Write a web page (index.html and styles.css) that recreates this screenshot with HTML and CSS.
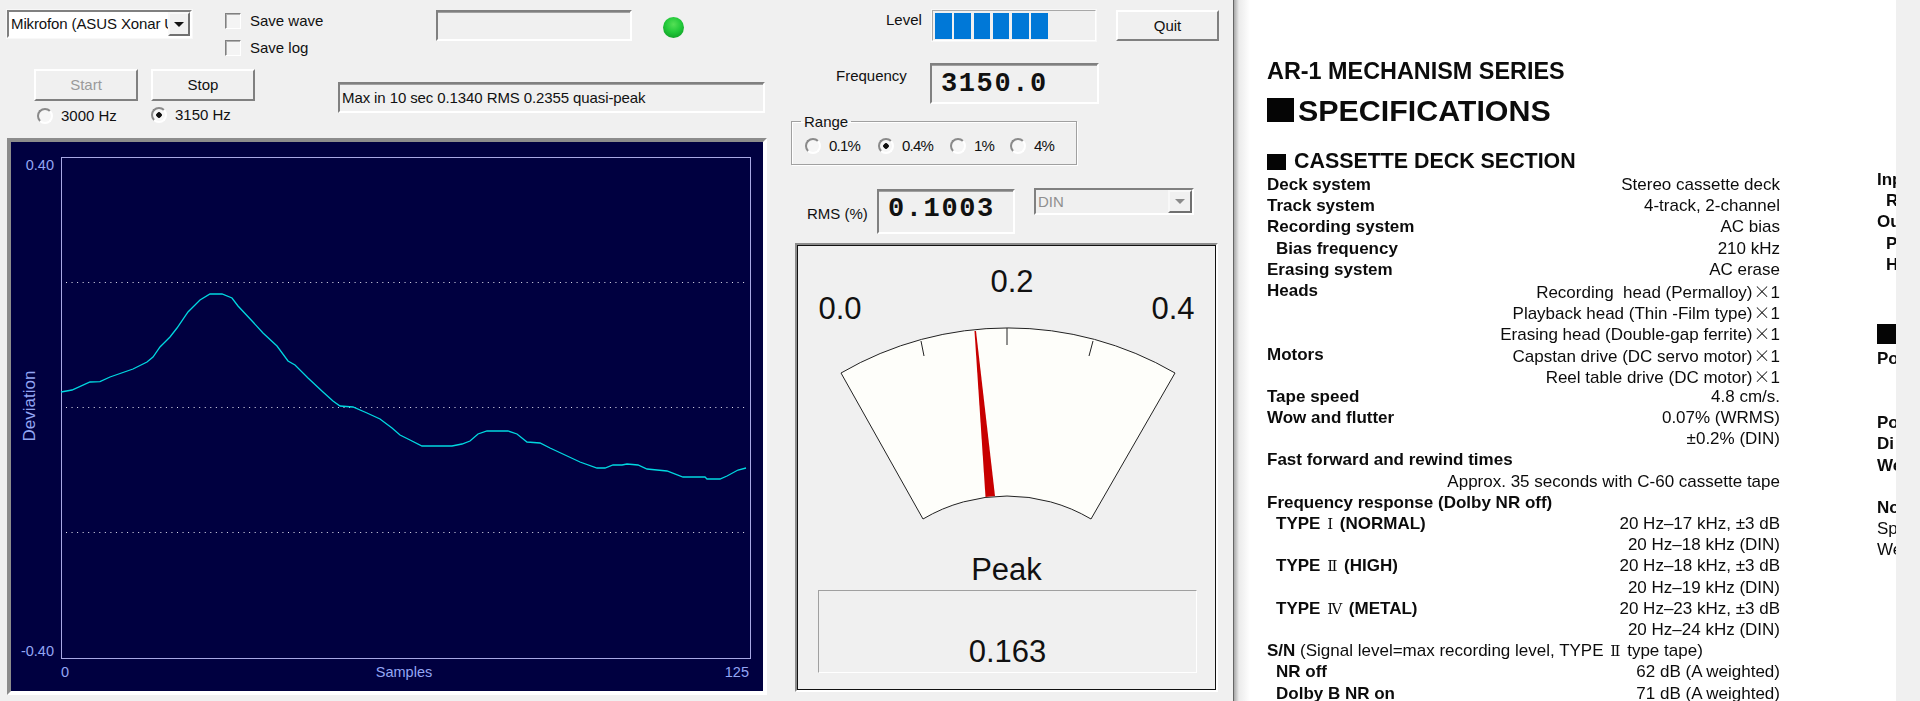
FILE: index.html
```html
<!DOCTYPE html>
<html lang="en">
<head>
<meta charset="utf-8">
<title>Wow and flutter meter</title>
<link rel="stylesheet" href="styles.css">
</head>
<body>
<main class="app">
  <section class="left">
    <div class="row-top">
      <div class="combo combo-device"><span class="combo-text">Mikrofon (ASUS Xonar U</span><span class="combo-btn"><i class="arrow"></i></span></div>
      <div class="checks">
        <label class="check"><i class="box"></i>Save wave</label>
        <label class="check"><i class="box"></i>Save log</label>
      </div>
      <div class="sunken file-box"></div>
      <div class="led"></div>
    </div>
    <div class="row-run">
      <div class="run-grid">
        <div class="btn disabled">Start</div>
        <div class="btn">Stop</div>
        <label class="radio-item r-3000"><i class="radio"></i>3000 Hz</label>
        <label class="radio-item r-3150"><i class="radio on"></i>3150 Hz</label>
      </div>
      <div class="sunken status">Max in 10 sec 0.1340 RMS 0.2355 quasi-peak</div>
    </div>
    <div class="chart">
      <svg class="chart-svg" viewBox="11 142 752 549" role="img" aria-label="Deviation chart">
        <line class="grid" x1="66" x2="746" y1="282.5" y2="282.5"/>
        <line class="grid" x1="66" x2="746" y1="407.5" y2="407.5"/>
        <line class="grid" x1="66" x2="746" y1="532.5" y2="532.5"/>
        <rect class="plot" x="61.5" y="157.5" width="689" height="501"/>
        <polyline class="trace" points="61,392 72,390 90,382 100,381.7 110,377 133,369 147,362 153,357 160,347 170,337 177,328 188,312 200,300 210,294 222,294 232,298 238,306 253,322 263,333 277,346 288,361 295,365 308,378 323,392 333,401 340,406 353,407 367,413 380,419 392,428 400,435 410,440 422,446 452,446 462,444 470,441 478,434 487,431 508,431 517,434 527,442 540,443 550,448 580,462 597,468 605,468 613,465 622,465 627,464 638,465 647,469 667,471 683,477 705,477 707,479 720,479 727,476 738,470 746,468"/>
        <text class="axis" x="54" y="170" text-anchor="end">0.40</text>
        <text class="axis" x="54" y="656" text-anchor="end">-0.40</text>
        <text class="axis" x="61" y="677">0</text>
        <text class="axis" x="404" y="677" text-anchor="middle">Samples</text>
        <text class="axis" x="749" y="677" text-anchor="end">125</text>
        <text class="axis axis-y" transform="translate(35 406) rotate(-90)" text-anchor="middle">Deviation</text>
      </svg>
    </div>
  </section>
  <section class="right">
    <div class="row-level">
      <span class="lbl-level">Level</span>
      <div class="sunken-soft level-bar">
        <i class="seg"></i><i class="seg"></i><i class="seg"></i><i class="seg"></i><i class="seg"></i><i class="seg"></i>
      </div>
      <div class="btn quit">Quit</div>
    </div>
    <div class="row-freq">
      <span class="lbl-freq">Frequency</span>
      <div class="sunken readout freq">3150.0</div>
    </div>
    <fieldset class="range">
      <legend>Range</legend>
      <label class="radio-item r-a"><i class="radio"></i>0.1%</label>
      <label class="radio-item r-b"><i class="radio on"></i>0.4%</label>
      <label class="radio-item r-c"><i class="radio"></i>1%</label>
      <label class="radio-item r-d"><i class="radio"></i>4%</label>
    </fieldset>
    <div class="row-rms">
      <span class="lbl-rms">RMS (%)</span>
      <div class="sunken readout rms">0.1003</div>
      <div class="combo combo-din"><span class="combo-text">DIN</span><span class="combo-btn"><i class="arrow"></i></span></div>
    </div>
    <div class="meter-frame">
      <div class="meter">
        <svg class="dial" viewBox="798 247 418 309" role="img" aria-label="Peak meter">
          <path class="face" d="M841 374 A332 332 0 0 1 1175 374 L1091 520 A165 165 0 0 0 923 520 Z"/>
          <line class="tick" x1="921" y1="342" x2="924" y2="357"/>
          <line class="tick" x1="1007" y1="329" x2="1007" y2="346"/>
          <line class="tick" x1="1093" y1="342" x2="1089" y2="357"/>
          <polygon class="needle" points="974.5,332 976,332 995,497 985.5,498"/>
          <text class="dial-num" x="840" y="320" text-anchor="middle">0.0</text>
          <text class="dial-num" x="1012" y="293" text-anchor="middle">0.2</text>
          <text class="dial-num" x="1173" y="320" text-anchor="middle">0.4</text>
        </svg>
        <div class="peak-label">Peak</div>
        <div class="peak-box">0.163</div>
      </div>
    </div>
  </section>
</main>
<article class="doc">
  <div class="doc-main">
    <h1 class="series">AR-1 MECHANISM SERIES</h1>
    <h2 class="spec"><i class="sq sq-big"></i>SPECIFICATIONS</h2>
    <h3 class="section"><i class="sq sq-mid"></i>CASSETTE DECK SECTION</h3>
    <div class="row"><b>Deck system</b><span>Stereo cassette deck</span></div>
    <div class="row"><b>Track system</b><span>4-track, 2-channel</span></div>
    <div class="row"><b>Recording system</b><span>AC bias</span></div>
    <div class="row"><b class="ind">Bias frequency</b><span>210 kHz</span></div>
    <div class="row"><b>Erasing system</b><span>AC erase</span></div>
    <div class="row"><b>Heads</b><span>Recording&nbsp; head (Permalloy)<em>×</em>1</span></div>
    <div class="row"><b></b><span>Playback head (Thin -Film type)<em>×</em>1</span></div>
    <div class="row"><b></b><span>Erasing head (Double-gap ferrite)<em>×</em>1</span></div>
    <div class="row"><b>Motors</b><span>Capstan drive (DC servo motor)<em>×</em>1</span></div>
    <div class="row"><b></b><span>Reel table drive (DC motor)<em>×</em>1</span></div>
    <div class="row"><b>Tape speed</b><span>4.8 cm/s.</span></div>
    <div class="row"><b>Wow and flutter</b><span>0.07% (WRMS)</span></div>
    <div class="row"><b></b><span>±0.2% (DIN)</span></div>
    <div class="row"><b>Fast forward and rewind times</b></div>
    <div class="row"><b></b><span>Approx. 35 seconds with C-60 cassette tape</span></div>
    <div class="row"><b>Frequency response (Dolby NR off)</b></div>
    <div class="row"><b class="ind">TYPE <u>Ⅰ</u> (NORMAL)</b><span>20 Hz–17 kHz, ±3 dB</span></div>
    <div class="row"><b></b><span>20 Hz–18 kHz (DIN)</span></div>
    <div class="row"><b class="ind">TYPE <u>Ⅱ</u> (HIGH)</b><span>20 Hz–18 kHz, ±3 dB</span></div>
    <div class="row"><b></b><span>20 Hz–19 kHz (DIN)</span></div>
    <div class="row"><b class="ind">TYPE <u>Ⅳ</u> (METAL)</b><span>20 Hz–23 kHz, ±3 dB</span></div>
    <div class="row"><b></b><span>20 Hz–24 kHz (DIN)</span></div>
    <div class="row row-left"><b>S/N</b><span>&nbsp;(Signal level=max recording level, TYPE <u>Ⅱ</u> type tape)</span></div>
    <div class="row"><b class="ind">NR off</b><span>62 dB (A weighted)</span></div>
    <div class="row"><b class="ind">Dolby B NR on</b><span>71 dB (A weighted)</span></div>
  </div>
  <div class="doc-side">
    <div class="side"><b>Inp</b></div>
    <div class="side"><b class="ind">R</b></div>
    <div class="side"><b>Ou</b></div>
    <div class="side"><b class="ind">P</b></div>
    <div class="side"><b class="ind">H</b></div>
    <i class="sq sq-side"></i>
    <div class="side"><b>Po</b></div>
    <div class="side gap-a"><b>Po</b></div>
    <div class="side"><b>Di</b></div>
    <div class="side"><b>We</b></div>
    <div class="side gap-b"><b>No</b></div>
    <div class="side"><span>Sp</span></div>
    <div class="side"><span>We</span></div>
  </div>
</article>
<div class="edge"></div>
</body>
</html>
```
FILE: styles.css
```css
* { box-sizing: border-box; }
html, body { margin: 0; height: 701px; overflow: hidden; }
body {
  display: flex;
  background: #f0f0f0;
  font: 15px/18px "Liberation Sans", Arial, sans-serif;
  color: #111;
}
i, u, em { font-style: normal; text-decoration: none; }

/* application window */
.app {
  display: flex;
  flex: 0 0 1234px;
  height: 701px;
  padding-left: 7px;
  background: #f0f0f0;
  border-right: 1px solid #666;
}
.left { width: 760px; }
.right { width: 430px; margin-left: 23px; }

.sunken {
  background: #f0f0f0;
  border: 2px solid;
  border-color: #808080 #fff #fff #808080;
  box-shadow: inset 0 1px 0 #a0a0a0;
}
.sunken-soft {
  background: #f0f0f0;
  border: 1px solid;
  border-color: #a8a8a8 #fff #fff #a8a8a8;
  outline: 1px solid #f8f8f8;
}

.row-top { display: flex; align-items: flex-start; height: 59px; padding-top: 10px; }
.combo { display: flex; background: #fff; border: 2px solid; border-color: #808080 #fff #fff #808080; }
.combo-device { width: 185px; height: 28px; border-width: 2px; outline: 1px solid #f8f8f8; }
.combo-text { flex: 1; overflow: hidden; white-space: nowrap; padding: 2px 0 0 2px; line-height: 20px; }
.combo-device .combo-text { letter-spacing: -0.12px; }
.combo-btn {
  display: flex;
  flex: 0 0 22px;
  align-items: center;
  justify-content: center;
  background: #f0f0f0;
  border: 2px solid;
  border-color: #f8f8f8 #707070 #707070 #f8f8f8;
}
.arrow { width: 0; height: 0; border: 5px solid transparent; border-top: 5px solid #111; border-bottom: 0; }

.checks { display: flex; flex-direction: column; width: 211px; margin-left: 33px; gap: 10px; padding-top: 2px; }
.check { display: flex; align-items: center; height: 17px; gap: 9px; }
.box {
  width: 16px; height: 16px;
  background: #f4f4f4;
  border: 1px solid;
  border-color: #808080 #fff #fff #808080;
  box-shadow: inset 1px 1px 0 #b0b0b0;
}
.file-box { width: 196px; height: 31px; }
.led {
  width: 21px; height: 21px;
  margin: 7px 0 0 31px;
  border-radius: 50%;
  background: radial-gradient(circle at 50% 35%, #55e055 0, #22c93a 45%, #12a428 80%, #0c8a20 100%);
}

.row-run { display: flex; align-items: flex-start; height: 69px; margin-top: 10px; padding-left: 27px; }
.run-grid { display: grid; grid-template-columns: 104px 104px; column-gap: 13px; row-gap: 6px; }
.btn {
  display: flex;
  align-items: center;
  justify-content: center;
  height: 32px;
  background: #f0f0f0;
  border: 2px solid;
  border-color: #fff #808080 #808080 #fff;
}
.btn.disabled { color: #9a9a9a; }
.radio-item { display: inline-flex; align-items: center; gap: 8px; height: 18px; }
.radio {
  width: 16px; height: 16px;
  border-radius: 50%;
  border: 2px solid;
  border-color: #8a8a8a #fff #fff #8a8a8a;
  background: #f6f6f6;
}
.radio.on { background: radial-gradient(circle, #111 0 2.5px, #f6f6f6 3px); }
.r-3000 { margin-left: 3px; }
.r-3150 { margin-left: 0; margin-top: -1px; }
.status { width: 427px; height: 31px; margin: 13px 0 0 83px; padding: 3px 0 0 2px; line-height: 21px; white-space: nowrap; letter-spacing: -0.1px; }

.chart {
  width: 760px;
  height: 557px;
  background: #000040;
  border: 4px solid;
  border-color: #8c8c8c #fff #fff #8c8c8c;
}
.chart-svg { display: block; width: 752px; height: 549px; }
.grid { stroke: #e4e4f0; stroke-width: 1; stroke-dasharray: 1 4.55; }
.plot { fill: none; stroke: #a8a8e4; stroke-width: 1; }
.trace { fill: none; stroke: #00d8e0; stroke-width: 1.3; }
.axis { fill: #93a6f4; font: 14.5px "Liberation Sans", Arial, sans-serif; }
.axis-y { font-size: 17px; }

/* right panel */
.row-level { display: flex; align-items: flex-start; height: 63px; padding-top: 10px; }
.lbl-level { width: 46px; margin-left: 96px; line-height: 20px; }
.level-bar { display: flex; gap: 2.8px; width: 164px; height: 31px; padding: 2px 0 0 2px; }
.seg { width: 16.5px; height: 26px; background: #0078d7; }
.quit { width: 103px; height: 31px; margin-left: 20px; }

.row-freq { display: flex; align-items: flex-start; height: 41px; }
.lbl-freq { width: 94px; margin-left: 46px; padding-top: 4px; }
.readout { font: bold 27px/30px "Liberation Mono", "Courier New", monospace; letter-spacing: 1.6px; padding-left: 9px; }
.freq { width: 169px; height: 41px; padding-top: 4px; }

.range {
  position: relative;
  display: block;
  width: 286px;
  height: 52px;
  margin: 9px 0 0 1px;
  padding: 0;
  border: 1px solid #a0a0a0;
  box-shadow: 1px 1px 0 #fff, inset 1px 1px 0 #fff;
}
.range legend { margin-left: 9px; padding: 0 3px; line-height: 17px; }
.range .radio-item { position: absolute; top: 7px; letter-spacing: -0.8px; }
.r-a { left: 13px; }
.r-b { left: 86px; }
.r-c { left: 158px; }
.r-d { left: 218px; }

.row-rms { display: flex; align-items: flex-start; height: 55px; margin-top: 23px; }
.lbl-rms { width: 70px; margin-left: 17px; padding-top: 17px; }
.rms { width: 138px; height: 45px; margin-top: 1px; padding-top: 3px; }
.combo-din { width: 160px; height: 27px; margin-left: 19px; background: #f0f0f0; color: #8f8f8f; }
.combo-din .combo-btn { flex-basis: 24px; }
.combo-din .arrow { border-top-color: #8a8a8a; }

.meter-frame {
  width: 423px;
  height: 449px;
  margin-left: 5px;
  border: 2px solid;
  border-color: #8c8c8c #fff #fff #8c8c8c;
}
.meter { height: 445px; border: 1px solid #111; }
.dial { display: block; width: 418px; height: 309px; }
.face { fill: #fefefa; stroke: #222; stroke-width: 1; }
.tick { stroke: #222; stroke-width: 1; }
.needle { fill: #c80000; }
.dial-num { fill: #111; font: 31px "Liberation Sans", Arial, sans-serif; }
.peak-label { height: 30px; font-size: 31px; line-height: 30px; text-align: center; }
.peak-box {
  display: flex;
  align-items: flex-end;
  justify-content: center;
  width: 379px;
  height: 83px;
  margin: 5px 0 0 20px;
  padding-bottom: 2px;
  border: 1px solid;
  border-color: #a0a0a0 #fff #fff #a0a0a0;
  font-size: 31px;
  line-height: 36px;
}

/* scanned document */
.doc {
  display: flex;
  flex: 0 0 662px;
  height: 701px;
  overflow: hidden;
  padding: 59px 0 0 33px;
  background: linear-gradient(to right, #a8a8a8 0, #ececec 5px, #f4f4f4 10px, #fff 16px);
  color: #0c0c0c;
  font-size: 17px;
  line-height: 21.2px;
}
.edge { flex: 1; background: #f0f0f0; }
.doc-main { flex: 0 0 513px; filter: blur(0.3px); }
.series { margin: 0; font-size: 23.4px; line-height: 24px; }
.spec { display: flex; align-items: center; gap: 4px; margin: 14px 0 0; font-size: 30.4px; line-height: 26px; }
.section { display: flex; align-items: center; gap: 8px; margin: 26px 0 0; font-size: 21.4px; line-height: 25px; }
.sq { display: block; background: #050505; }
.sq-big { width: 27px; height: 24px; }
.sq-mid { width: 19px; height: 16px; }
.row { display: flex; justify-content: space-between; height: 21.2px; white-space: nowrap; }
.row-left { justify-content: flex-start; }
.ind { margin-left: 9px; }
.row em { font-family: "Noto Sans CJK JP", sans-serif; font-size: 17px; font-weight: 300; margin-left: 1px; }
.row u { margin: 0 2px; font-family: "DejaVu Serif", serif; font-size: 15px; font-weight: 400; }
.doc-side { flex: 0 0 20px; margin-left: 97px; padding-top: 110px; overflow: hidden; white-space: nowrap; filter: blur(0.3px); }
.side { height: 21.2px; }
.sq-side { width: 30px; height: 20px; margin: 49px 0 4px; }
.gap-a { margin-top: 43px; }
.gap-b { margin-top: 21px; }
```
